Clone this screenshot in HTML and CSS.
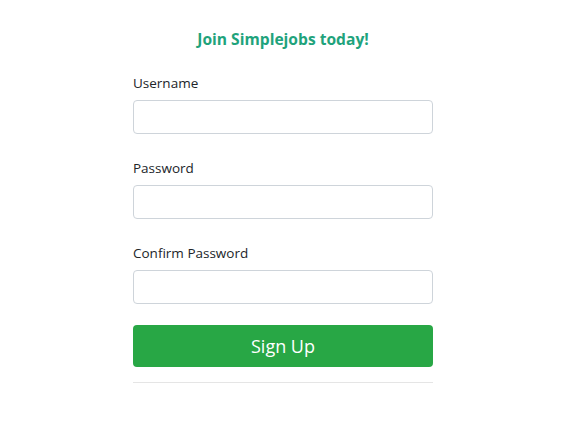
FILE: index.html
```html
<!DOCTYPE html>
<html>
<head>
<meta charset="utf-8">
<link rel="stylesheet" href="styles.css">
</head>
<body>
<div class="wrap">
  <h5 class="title">Join Simplejobs today!</h5>
  <form class="form">
    <div class="group">
      <label class="label">Username</label>
      <input class="input" type="text">
    </div>
    <div class="group">
      <label class="label">Password</label>
      <input class="input" type="password">
    </div>
    <div class="group group-last">
      <label class="label">Confirm Password</label>
      <input class="input" type="password">
    </div>
    <button class="btn" type="button">Sign Up</button>
  </form>
  <hr class="rule">
</div>
</body>
</html>
```
FILE: styles.css
```css
* { box-sizing: border-box; }
html, body { margin: 0; background: #fff; }
body {
  padding: 0 1px 0 0;
  font-family: "Open Sans", "Noto Sans", sans-serif;
  color: #212529;
}
.wrap {
  width: 300px;
  margin: 0 auto;
  padding-top: 28px;
}
.title {
  margin: 0 0 23px;
  text-align: center;
  font-size: 15.6px;
  font-weight: 700;
  line-height: 22px;
  color: #1fa37c;
}
.form { display: flex; flex-direction: column; }
.group {
  display: flex;
  flex-direction: column;
  margin-bottom: 24px;
}
.group-last { margin-bottom: 21px; }
.label {
  font-size: 13.5px;
  line-height: 20px;
  margin-bottom: 7px;
}
.input {
  height: 34px;
  width: 100%;
  border: 1px solid #ced4da;
  border-radius: 4px;
  background: #fff;
  padding: 6px 12px;
  font: inherit;
}
.btn {
  height: 42px;
  width: 100%;
  border: none;
  border-radius: 4px;
  background: #28a745;
  color: #fff;
  font-family: "Open Sans", "Noto Sans", sans-serif;
  font-size: 18px;
  cursor: pointer;
}
.rule {
  margin: 15px 0 0;
  border: 0;
  border-top: 1px solid #e5e5e5;
}
```
